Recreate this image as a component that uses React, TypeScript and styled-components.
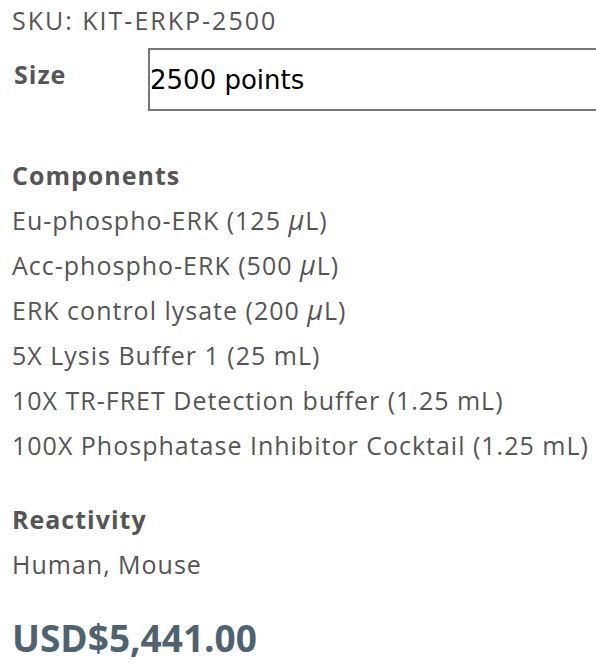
import React from "react";
import styled, { createGlobalStyle } from "styled-components";

const Global = createGlobalStyle`
  html, body { margin: 0; padding: 0; background: #fff; }
  body { font-family: "Open Sans", "Noto Sans", sans-serif; color: #555; }
`;

const Page = styled.div`
  padding: 0 12px;
  display: flex;
  flex-direction: column;
`;

const Sku = styled.div`
  font-size: 25px;
  line-height: 40px;
  letter-spacing: 2px;
  color: #555;
`;

const SizeRow = styled.div`
  display: flex;
  align-items: center;
  margin-top: 8px;
`;

const SizeLabel = styled.label`
  width: 134px;
  padding-left: 2px;
  margin-top: -11px;
  font-size: 25px;
  font-weight: 700;
  letter-spacing: 1px;
  color: #555;
`;

const SizeSelect = styled.div`
  flex: 1;
  margin-right: -40px;
  height: 59px;
  border: 2px solid #777;
  display: flex;
  align-items: center;
  padding-left: 0;
  font-family: "DejaVu Sans", sans-serif;
  font-size: 26px;
  color: #000;
`;

const Section = styled.section<{ $top: number }>`
  margin-top: ${(p) => p.$top}px;
`;

const Heading = styled.h3`
  margin: 0;
  font-size: 25px;
  font-weight: 700;
  line-height: 45px;
  letter-spacing: 1px;
  color: #555;
`;

const Line = styled.div`
  font-size: 25px;
  line-height: 45px;
  height: 45px;
  letter-spacing: 1px;
  color: #555;
  white-space: nowrap;
`;

const Micro = styled.i`
  font-size: 27px;
  line-height: 0;
  letter-spacing: 1px;
`;

const Price = styled.div`
  margin-top: 26px;
  font-size: 37px;
  font-weight: 700;
  line-height: 50px;
  color: #4f6272;
`;

const components = [
  <>Eu-phospho-ERK (125 <Micro>μ</Micro>L)</>,
  <>Acc-phospho-ERK (500 <Micro>μ</Micro>L)</>,
  <>ERK control lysate (200 <Micro>μ</Micro>L)</>,
  <>5X Lysis Buffer 1 (25 mL)</>,
  <>10X TR-FRET Detection buffer (1.25 mL)</>,
  <>100X Phosphatase Inhibitor Cocktail (1.25 mL)</>,
];

export default function App() {
  return (
    <>
      <Global />
      <Page>
        <Sku>SKU: KIT-ERKP-2500</Sku>
        <SizeRow>
          <SizeLabel>Size</SizeLabel>
          <SizeSelect>2500 points</SizeSelect>
        </SizeRow>
        <Section $top={42}>
          <Heading>Components</Heading>
          {components.map((c, i) => (
            <Line key={i}>{c}</Line>
          ))}
        </Section>
        <Section $top={29}>
          <Heading>Reactivity</Heading>
          <Line>Human, Mouse</Line>
        </Section>
        <Price>USD$5,441.00</Price>
      </Page>
    </>
  );
}
